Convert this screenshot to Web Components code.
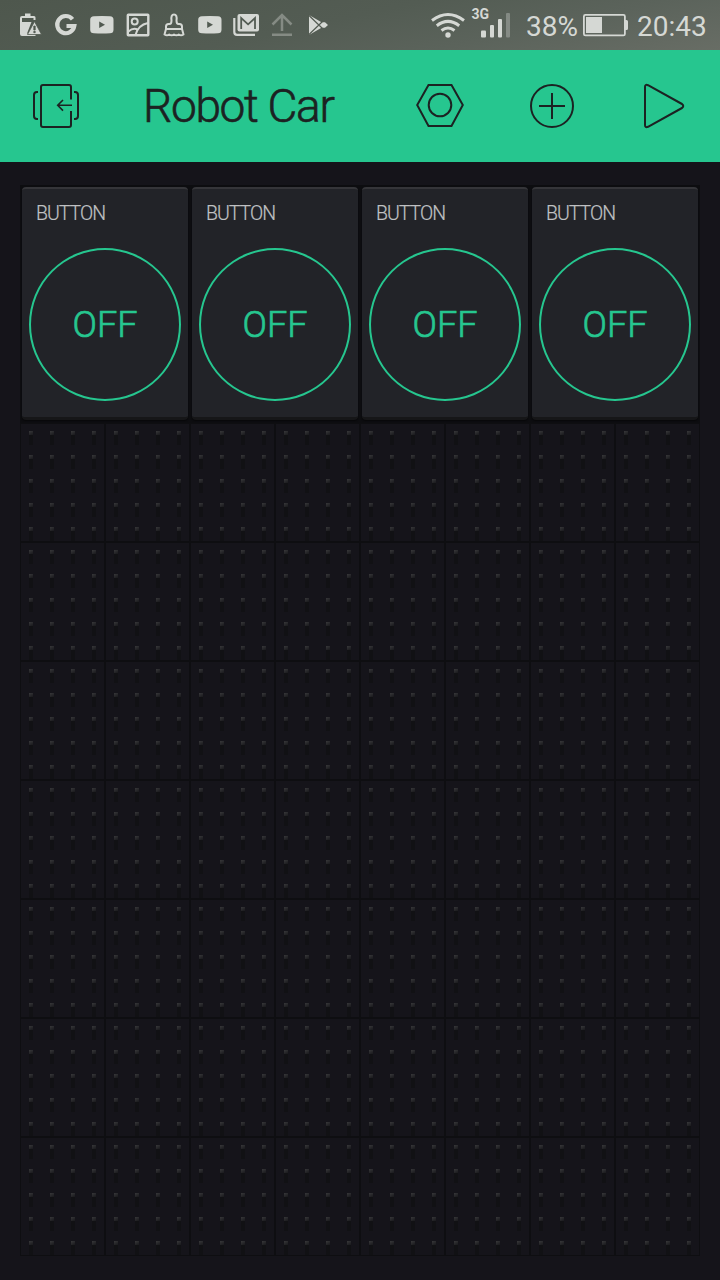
<!DOCTYPE html>
<html lang="en">
<head>
<meta charset="utf-8">
<title>Robot Car</title>
<style>
body{
    margin:0;
    background:#15141a;
    font-family:Roboto,"Liberation Sans",sans-serif;
}
</style>
</head>
<body>
<robot-app></robot-app>

<template id="status-bar">
<style>
    :host{
        display:flex;
        height:50px;
        color:#d5d8d4;
        background:linear-gradient(168deg,#4e574d 0%,#535c53 45%,#5b635b 70%,#686d65 100%);
    }
    svg{display:block;flex:none}
    .notes{display:flex;padding-left:12px;flex:1}
    .system{display:flex;align-items:center;font-size:28px;line-height:50px}
    .net{font-size:14px;font-weight:700}
    .percent{width:54px;margin-left:12px;white-space:nowrap;padding-top:3px}
    .clock{margin-left:8px;width:83px;padding-top:3px}
</style>
<div class="notes">
    <svg width="36" height="50" viewBox="12 0 36 50" fill="currentColor">
        <path d="M25 13.500h5.500V16H25z"/>
        <path d="M22 16h12q1.500 0 1.500 1.500V20h-2v-2H22v4h9.500L27 33.500h8.500V36H22q-2 0-2-2V18q0-2 2-2z"/>
        <path stroke="#50594f" stroke-width=".8" fill-rule="evenodd" d="M34.500 21.500L41.500 34.500H27.500zM33.800 26v4h1.400v-4zm0 5.300v1.400h1.400v-1.400z"/>
    </svg>
    <svg width="36" height="50" viewBox="48 0 36 50" fill="none" stroke="currentColor" stroke-width="4.200">
        <path d="M72.500 19.200A8.600 8.600 0 1 0 74.300 26H66.500"/>
    </svg>
    <svg width="36" height="50" viewBox="84 0 36 50">
        <path fill="currentColor" fill-rule="evenodd" d="M94 16.200q8-.6 16 0 3.500 0 3.500 3.500v10q0 3.500-3.500 3.500-8 .6-16 0-3.800 0-3.800-3.500v-10q0-3.500 3.800-3.500zM99.200 21.500v6.500l5.800-3.200z"/>
    </svg>
    <svg width="36" height="50" viewBox="120 0 36 50" fill="none" stroke="currentColor" stroke-width="2">
        <rect x="127.800" y="14.800" width="20.500" height="20.500" rx=".5" stroke-width="2.400"/>
        <circle cx="134.700" cy="21.600" r="3"/>
        <path d="M135.500 35Q138 25 148 23M128.500 31.500Q133 27.500 137.500 29.500"/>
    </svg>
    <svg width="36" height="50" viewBox="156 0 36 50" fill="none" stroke="currentColor" stroke-width="2" stroke-linejoin="round">
        <path d="M171.500 20.500q-.8-6 2.500-6t2.500 6q0 3.500 2 3.500h1q2.500 0 2.500 2.500V29h-16v-2.500q0-2.500 2.500-2.500h1q2 0 2-3.500zM166 29l-1.500 5.500q2.500 1.500 4.700 0 2.400 1.700 4.800 0 2.400 1.700 4.800 0 2.200 1.500 4.700 0L182 29"/>
    </svg>
    <svg width="36" height="50" viewBox="192 0 36 50">
        <path fill="currentColor" fill-rule="evenodd" d="M202 16.200q8-.6 16 0 3.500 0 3.500 3.500v10q0 3.500-3.500 3.500-8 .6-16 0-3.800 0-3.800-3.500v-10q0-3.500 3.800-3.500zM207.200 21.500v6.500l5.800-3.200z"/>
    </svg>
    <svg width="36" height="50" viewBox="228 0 36 50" fill="none">
        <path stroke="currentColor" stroke-width="2.200" d="M234.300 18v14q0 2.800 2.800 2.800H255"/>
        <rect x="237.500" y="14" width="21.500" height="17.500" rx="2" fill="currentColor"/>
        <path stroke="#535c53" stroke-width="1.800" d="M241.200 29V18l6.900 6.300 6.900-6.300v11"/>
    </svg>
    <svg width="36" height="50" viewBox="264 0 36 50" fill="none" stroke="#858b84" stroke-width="2.500">
        <path d="M272 34.800h20M282 31V15.500M272.500 24.500l9.500-9.500 9.500 9.500"/>
    </svg>
    <svg width="36" height="50" viewBox="300 0 36 50">
        <path fill="currentColor" d="M309 15l12.500 7.200h3.500l3 2.800-3 2.800h-3.500L309 35z"/>
        <path fill="none" stroke="#535b52" stroke-width="1.200" d="M308.500 15l14 13.500M308.500 35l14-13.500"/>
    </svg>
</div>
<div class="system">
    <svg width="86" height="50" viewBox="428 0 86 50" fill="none" stroke="currentColor">
        <g stroke-width="3">
            <path d="M432 20.500q16-12 32 0M436.800 25.700q11.200-8.600 22.400 0M441.500 30.500q6.500-5 13 0"/>
        </g>
        <circle cx="448" cy="35" r="2.700" fill="currentColor" stroke="none"/>
        <g fill="currentColor" stroke="none">
            <rect x="481" y="30.500" width="5" height="7" rx="1"/>
            <rect x="490" y="25" width="4" height="12.500" rx="1"/>
            <rect x="498" y="19" width="4" height="18.500" rx="1"/>
            <rect x="506" y="13" width="4" height="24.500" rx="1" opacity=".35"/>
            <text class="net" x="471.500" y="19">3G</text>
        </g>
    </svg>
    <span class="percent">38%</span>
    <svg width="49" height="50" viewBox="580 0 49 50" fill="none" stroke="currentColor" stroke-width="1.800">
        <rect x="583.900" y="14.900" width="41" height="20.500" rx="1.500"/>
        <path fill="currentColor" stroke="none" d="M586 17h16v16h-16zM625 20h1.500q1.500 0 1.500 1.500v7q0 1.500-1.500 1.500H625z"/>
    </svg>
    <span class="clock">20:43</span>
</div>
</template>

<template id="app-header">
<style>
    :host{
        display:grid;
        grid-template-columns:112px 272px 112px 112px 112px;
        height:112px;
        align-items:center;
        background:#26c68f;
        color:#1c2222;
    }
    h1{
        margin:0;
        padding-left:31px;
        font-size:46px;
        font-weight:300;
        line-height:110px;
        letter-spacing:-1.3px;
        -webkit-text-stroke:.6px currentColor;
        white-space:nowrap;
    }
    svg{display:block}
</style>
<svg width="112" height="112" viewBox="0 50 112 112" fill="none" stroke="currentColor" stroke-width="2">
    <path d="M71 99.500V87q0-2-2-2H43q-2 0-2 2v38q0 2 2 2h26q2 0 2-2v-14M38 92h-1q-3 0-3 3v21q0 3 3 3h1M74 92h1q3 0 3 3v21q0 3-3 3h-1"/>
    <path stroke-width="1.600" d="M72 105.300H58M63 100l-5.300 5.300 5.300 5.300"/>
</svg>
<h1><slot></slot></h1>
<svg width="112" height="112" viewBox="384 50 112 112" fill="none" stroke="currentColor" stroke-width="2">
    <path d="M428.500 85h23l11.300 20-11.300 21h-23L417.200 105z"/>
    <circle cx="440" cy="105" r="11.300"/>
</svg>
<svg width="112" height="112" viewBox="496 50 112 112" fill="none" stroke="currentColor" stroke-width="2">
    <circle cx="552" cy="106" r="21"/>
    <path d="M552 93v26M539 106h26"/>
</svg>
<svg width="112" height="112" viewBox="608 50 112 112" fill="none" stroke="currentColor" stroke-width="2" stroke-linejoin="round">
    <path d="M645 87q0-3 3-1.800l34 18.800q2.500 2 0 4l-34 18.800q-3 1.200-3-1.800z"/>
</svg>
</template>

<template id="button-widget">
<style>
    :host{
        display:block;
        box-sizing:border-box;
        height:238px;
        padding:2px;
        background:#0d0d10;
    }
    .card{
        box-sizing:border-box;
        height:233px;
        padding:0 7px;
        border-top:2px solid #353539;
        border-bottom:3px solid #161618;
        border-radius:4px;
        background:#222328;
        box-shadow:0 1px 1px #08080a;
    }
    .label{
        padding:13px 0 0 7px;
        height:46px;
        font-size:19.500px;
        font-weight:300;
        line-height:24px;
        letter-spacing:-1px;
        -webkit-text-stroke:.2px currentColor;
        color:#bfc0c2;
    }
    .round{
        box-sizing:border-box;
        width:152px;
        height:153px;
        border:2px solid #26c68f;
        border-radius:50%;
        color:#26c68f;
        font-size:36px;
        font-weight:300;
        line-height:151px;
        text-align:center;
        -webkit-text-stroke:.7px currentColor;
    }
</style>
<div class="card">
    <div class="label"><slot></slot></div>
    <div class="round"></div>
</div>
</template>

<template id="board-cell">
<style>
    :host{display:block;height:119px}
    svg{display:block}
</style>
<svg width="85" height="119">
    <defs>
        <linearGradient id="peg" x1="0" y1="0" x2=".6" y2="1">
            <stop offset="0" stop-color="#38383a"/>
            <stop offset="1" stop-color="#1d1d20"/>
        </linearGradient>
        <pattern id="pegs" x="9" y="7" width="21" height="24" patternUnits="userSpaceOnUse">
            <rect y="4" width="4" height="11" fill="#111114"/>
            <rect y="1" width="4" height="4" fill="url(#peg)"/>
        </pattern>
    </defs>
    <rect x=".5" y=".5" width="84" height="118" fill="#15141a" stroke="#0e0e11"/>
    <rect x="9" y="8" width="75" height="110" fill="url(#pegs)"/>
</svg>
</template>

<template id="robot-app">
<style>
    :host{display:block;width:720px;height:1280px;overflow:hidden;background:#15141a}
    main{padding:23px 20px 24px}
    .widgets{display:grid;grid-template-columns:repeat(4,170px)}
    .board{display:grid;grid-template-columns:repeat(8,85px)}
</style>
<status-bar></status-bar>
<app-header>Robot Car</app-header>
<main>
    <div class="widgets">
        <button-widget state="OFF">BUTTON</button-widget>
        <button-widget state="OFF">BUTTON</button-widget>
        <button-widget state="OFF">BUTTON</button-widget>
        <button-widget state="OFF">BUTTON</button-widget>
    </div>
    <div class="board"></div>
</main>
</template>

<script>
class TemplateElement extends HTMLElement{
    constructor(){
        super();
        const template = document.getElementById(this.localName);
        this.attachShadow({mode:'open'});
        this.shadowRoot.appendChild(template.content.cloneNode(true));
    }
}

class StatusBar extends TemplateElement{}
class AppHeader extends TemplateElement{}
class BoardCell extends TemplateElement{}

class ButtonWidget extends TemplateElement{
    connectedCallback(){
        this.shadowRoot.querySelector('.round').textContent = this.getAttribute('state');
    }
}

class RobotApp extends TemplateElement{
    connectedCallback(){
        const board = this.shadowRoot.querySelector('.board');
        // 7 free rows of 8 cells
        for(let i=0;i<56;i++){
            board.appendChild(document.createElement('board-cell'));
        }
    }
}

customElements.define('status-bar',StatusBar);
customElements.define('app-header',AppHeader);
customElements.define('button-widget',ButtonWidget);
customElements.define('board-cell',BoardCell);
customElements.define('robot-app',RobotApp);
</script>
</body>
</html>
